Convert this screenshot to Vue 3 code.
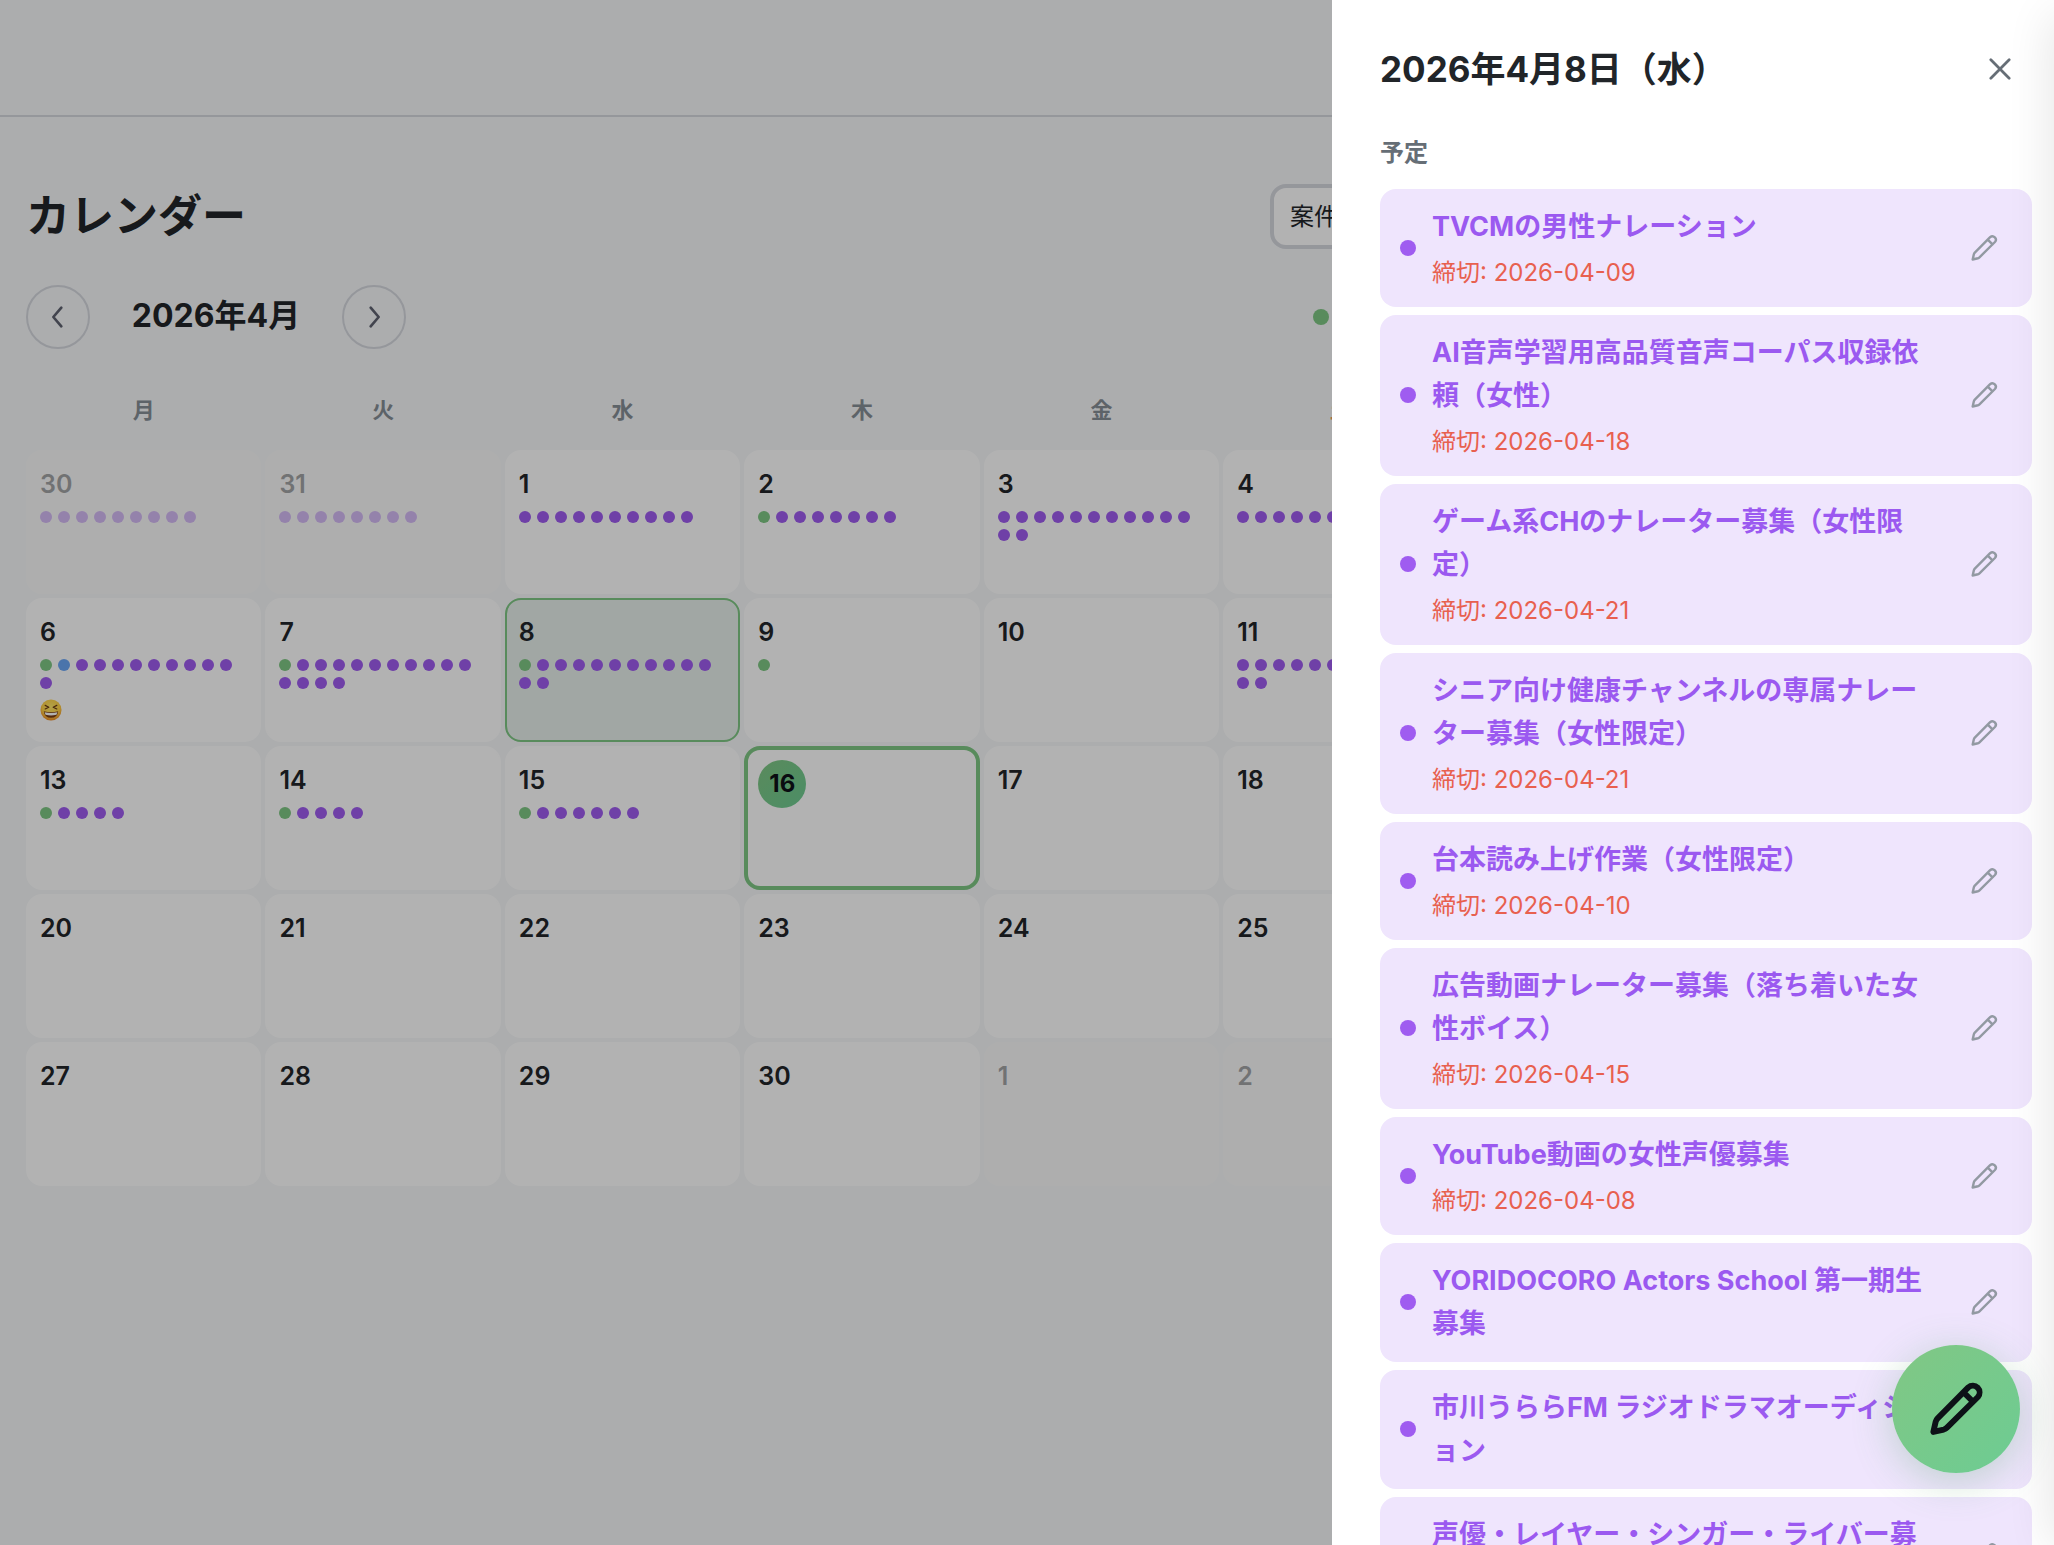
<template>
  <div class="page">
    <header class="topbar"></header>

    <main class="calendar">
      <div class="title-row">
        <h1>カレンダー</h1>
        <select v-model="filter" class="filter" aria-label="表示する予定">
          <option value="project">案件</option>
          <option value="all">すべて</option>
        </select>
      </div>

      <div class="month-row">
        <div class="month-nav">
          <button class="nav-button" aria-label="前の月">
            <svg viewBox="0 0 24 24"><path d="M14.5 5 8.5 12l6 7" /></svg>
          </button>
          <h2>2026年4月</h2>
          <button class="nav-button" aria-label="次の月">
            <svg viewBox="0 0 24 24"><path d="m9.5 5 6 7-6 7" /></svg>
          </button>
        </div>
        <div class="legend"><span class="legend-dot"></span></div>
      </div>

      <div class="weekdays">
        <span v-for="name in weekdays" :key="name" :class="{ saturday: name === '土', sunday: name === '日' }">{{ name }}</span>
      </div>

      <div class="grid">
        <button
            v-for="(day, index) in days"
            :key="index"
            class="day"
            :class="{ other: day.other, selected: day.selected, today: day.today }"
        >
          <span class="number">{{ day.number }}</span>
          <span v-if="day.dots" class="dots">
            <span v-for="(dot, i) in day.dots" :key="i" class="dot" :class="dotNames[dot]"></span>
          </span>
          <svg v-if="day.mood" class="mood" viewBox="0 0 22 22" role="img" aria-label="気分">
            <defs>
              <radialGradient id="face" cx="50%" cy="35%" r="65%">
                <stop offset="0" stop-color="#ffe96b" />
                <stop offset="0.65" stop-color="#ffd044" />
                <stop offset="1" stop-color="#ee8a25" />
              </radialGradient>
            </defs>
            <circle cx="11" cy="11" r="10.5" fill="url(#face)" />
            <path d="m5.2 6.4 3.6 1.9-3.6 1.7M16.8 6.4l-3.6 1.9 3.6 1.7" fill="none" stroke="#6b3a12" stroke-width="1.2" />
            <path d="M3.8 12.2q7.2 2 14.4 0-.6 6.6-7.2 6.6t-7.2-6.6z" fill="#7a3b12" />
            <path d="M4.6 13.2q6.4 1.6 12.8 0l-.9 2.6q-5.5 1.4-11 0z" fill="#fff" />
          </svg>
        </button>
      </div>
    </main>

    <div class="overlay"></div>

    <aside class="panel">
      <div class="panel-header">
        <h2>2026年4月8日（水）</h2>
        <button class="close" aria-label="閉じる">
          <svg viewBox="0 0 24 24"><path d="m2 2 20 20M22 2 2 22" /></svg>
        </button>
      </div>
      <h3>予定</h3>
      <ul class="events">
        <li v-for="event in events" :key="event.title" class="event">
          <span class="event-dot"></span>
          <div class="event-body">
            <p class="event-title">{{ event.title }}</p>
            <p v-if="event.deadline" class="event-deadline">締切: {{ event.deadline }}</p>
          </div>
          <button class="edit" aria-label="編集">
            <svg viewBox="0 0 24 24"><path :d="pencil" /></svg>
          </button>
        </li>
      </ul>
    </aside>

    <button class="fab" aria-label="新規作成">
      <svg viewBox="0 0 24 24"><path :d="pencil" /></svg>
    </button>
  </div>
</template>

<script setup>
import { ref } from 'vue'

const filter = ref('project')

const weekdays = ['月', '火', '水', '木', '金', '土', '日']

const pencil = 'M16.6 3.9a2.55 2.55 0 0 1 3.6 3.6L8.6 19q-.5.5-1.2.7l-3.9.9.9-3.9q.2-.7.7-1.2zM14.8 5.7l3.6 3.6'

// one letter per dot: g = green, b = blue, p = purple
const dotNames = { g: 'green', b: 'blue', p: 'purple' }

const marks = {
  1: 'pppppppppp',
  2: 'gppppppp',
  3: 'ppppppppppppp',
  4: 'pppppppp',
  6: 'gbpppppppppp',
  7: 'gpppppppppppppp',
  8: 'gpppppppppppp',
  9: 'g',
  11: 'ppppppppppppp',
  13: 'gpppp',
  14: 'gpppp',
  15: 'gpppppp'
}

const days = [
  { number: 30, other: true, dots: 'ppppppppp' },
  { number: 31, other: true, dots: 'pppppppp' },
  ...Array.from({ length: 30 }, (_, i) => ({
    number: i + 1,
    dots: marks[i + 1],
    selected: i + 1 === 8,
    today: i + 1 === 16,
    mood: i + 1 === 6
  })),
  { number: 1, other: true },
  { number: 2, other: true },
  { number: 3, other: true }
]

const events = [
  { title: 'TVCMの男性ナレーション', deadline: '2026-04-09' },
  { title: 'AI音声学習用高品質音声コーパス収録依頼（女性）', deadline: '2026-04-18' },
  { title: 'ゲーム系CHのナレーター募集（女性限定）', deadline: '2026-04-21' },
  { title: 'シニア向け健康チャンネルの専属ナレーター募集（女性限定）', deadline: '2026-04-21' },
  { title: '台本読み上げ作業（女性限定）', deadline: '2026-04-10' },
  { title: '広告動画ナレーター募集（落ち着いた女性ボイス）', deadline: '2026-04-15' },
  { title: 'YouTube動画の女性声優募集', deadline: '2026-04-08' },
  { title: 'YORIDOCORO Actors School 第一期生募集' },
  { title: '市川うららFM ラジオドラマオーディション' },
  { title: '声優・レイヤー・シンガー・ライバー募集' }
]
</script>

<style>
body {
  margin: 0;
  background: #f6f8fa;
}
</style>

<style scoped>
.page {
  height: 100vh;
  overflow: hidden;
  background: #f6f8fa;
  color: #212529;
  font-family: Inter, "Noto Sans CJK JP", sans-serif;
}

h1, h2, h3, p, ul {
  margin: 0;
  padding: 0;
}

button, select {
  font-family: inherit;
  color: inherit;
}

button {
  padding: 0;
  border: none;
  background: none;
  cursor: pointer;
}

svg {
  display: block;
  fill: none;
  stroke: currentColor;
  stroke-linecap: round;
  stroke-linejoin: round;
}

.topbar {
  height: 115px;
  border-bottom: 2px solid #d6d8df;
}

.calendar {
  max-width: 1672px;
  padding: 67px 26px 0;
}

.title-row,
.month-row {
  display: flex;
  align-items: center;
  justify-content: space-between;
}

h1 {
  padding-bottom: 2px;
  font-size: 44px;
  line-height: 60px;
  font-weight: 700;
}

.filter {
  width: 428px;
  height: 65px;
  padding: 0 16px;
  border: 4px solid #d6d8df;
  border-radius: 16px;
  background: #fff;
  font-size: 24px;
  appearance: none;
}

.month-row {
  margin-top: 36px;
}

.month-nav {
  display: flex;
  align-items: center;
  gap: 32px;
}

.month-nav h2 {
  min-width: 188px;
  padding-bottom: 2px;
  font-size: 32px;
  line-height: 40px;
  font-weight: 700;
  text-align: center;
}

.nav-button {
  display: grid;
  place-items: center;
  width: 64px;
  height: 64px;
  border: 2px solid #d6d8df;
  border-radius: 50%;
  color: #5f6270;
}

.nav-button svg {
  width: 32px;
  height: 32px;
  stroke-width: 2;
}

.legend {
  display: flex;
  align-items: center;
  width: 385px;
}

.legend-dot,
.event-dot {
  flex: none;
  width: 16px;
  height: 16px;
  border-radius: 50%;
}

.legend-dot {
  background: #7fc784;
}

.weekdays,
.grid {
  display: grid;
  grid-template-columns: repeat(7, 1fr);
  gap: 4px;
}

.weekdays {
  margin: 45px 0 24px;
  color: #868e96;
  font-size: 22px;
  line-height: 32px;
  font-weight: 600;
  text-align: center;
}

.saturday {
  color: #f0a05a;
}

.sunday {
  color: #e85d4e;
}

.day {
  display: flex;
  flex-direction: column;
  align-items: flex-start;
  gap: 7px;
  height: 144px;
  padding: 12px;
  border: 2px solid #fff;
  border-radius: 16px;
  background: #fff;
  text-align: left;
}

.day.other {
  border-color: #fafafa;
  background: #fafafa;
}

.other .number,
.other .dots {
  opacity: 0.4;
}

.day.selected {
  border-color: #7fc784;
  background: #e7f0eb;
}

.day.today {
  padding: 10px;
  border: 4px solid #7fc784;
}

.number {
  font-size: 25px;
  line-height: 40px;
  font-weight: 600;
}

.today .number {
  width: 48px;
  border-radius: 50%;
  background: linear-gradient(135deg, #81c784, #6dcc93);
  color: #0d1117;
  font-size: 24px;
  line-height: 48px;
  font-weight: 700;
  text-align: center;
}

.dots {
  display: flex;
  flex-wrap: wrap;
  gap: 6px;
}

.dot {
  width: 12px;
  height: 12px;
  border-radius: 50%;
}

.dot.green {
  background: #7fc784;
}

.dot.blue {
  background: #6ba6f5;
}

.dot.purple,
.event-dot {
  background: #9f5cf0;
}

.mood {
  width: 22px;
  height: 22px;
  margin-top: 3px;
  stroke: none;
}

.overlay {
  position: fixed;
  inset: 0;
  background: rgba(0, 0, 0, 0.3);
}

.panel {
  position: fixed;
  top: 0;
  right: 0;
  bottom: 0;
  box-sizing: border-box;
  width: 722px;
  max-width: 100%;
  padding: 48px 22px 0 48px;
  overflow: hidden;
  background: #fff;
}

/* soft shade along the window edge */
.panel::after {
  content: "";
  position: absolute;
  top: 16px;
  bottom: 0;
  left: 100%;
  width: 40px;
  box-shadow: 0 0 48px rgba(0, 0, 0, 0.12);
}

.panel-header {
  display: flex;
  align-items: center;
  justify-content: space-between;
  height: 42px;
  margin-bottom: 47px;
}

.panel-header h2 {
  font-size: 35px;
  line-height: 42px;
  font-weight: 700;
}

.close {
  display: grid;
  place-items: center;
  width: 48px;
  height: 48px;
  margin-right: 8px;
  color: #666e76;
}

.close svg {
  width: 22px;
  height: 22px;
  stroke-width: 3;
}

h3 {
  margin-bottom: 20px;
  color: #666e76;
  font-size: 24px;
  line-height: 32px;
  font-weight: 600;
}

.events {
  display: flex;
  flex-direction: column;
  gap: 8px;
  list-style: none;
}

.event {
  display: flex;
  align-items: center;
  gap: 16px;
  padding: 16px 20px 17px;
  border-radius: 16px;
  background: #efe5fd;
}

.event-body {
  flex: 1;
  min-width: 0;
  padding-right: 12px;
}

.event-title {
  color: #9b59f0;
  font-size: 27px;
  line-height: 43px;
  font-weight: 700;
}

.event-deadline {
  padding-top: 7px;
  color: #e8604f;
  font-size: 24px;
  line-height: 35px;
}

.edit {
  display: grid;
  place-items: center;
  flex: none;
  width: 56px;
  height: 56px;
  color: #9299a2;
}

.edit svg {
  width: 32px;
  height: 32px;
  stroke-width: 1.8;
}

.fab {
  position: fixed;
  right: 34px;
  bottom: 72px;
  display: grid;
  place-items: center;
  width: 128px;
  height: 128px;
  border-radius: 50%;
  background: linear-gradient(135deg, #81c784, #6dcc93);
  box-shadow: 0 8px 40px rgba(80, 160, 100, 0.3);
  color: #0d1117;
}

.fab svg {
  width: 64px;
  height: 64px;
  stroke-width: 2.2;
}
</style>
